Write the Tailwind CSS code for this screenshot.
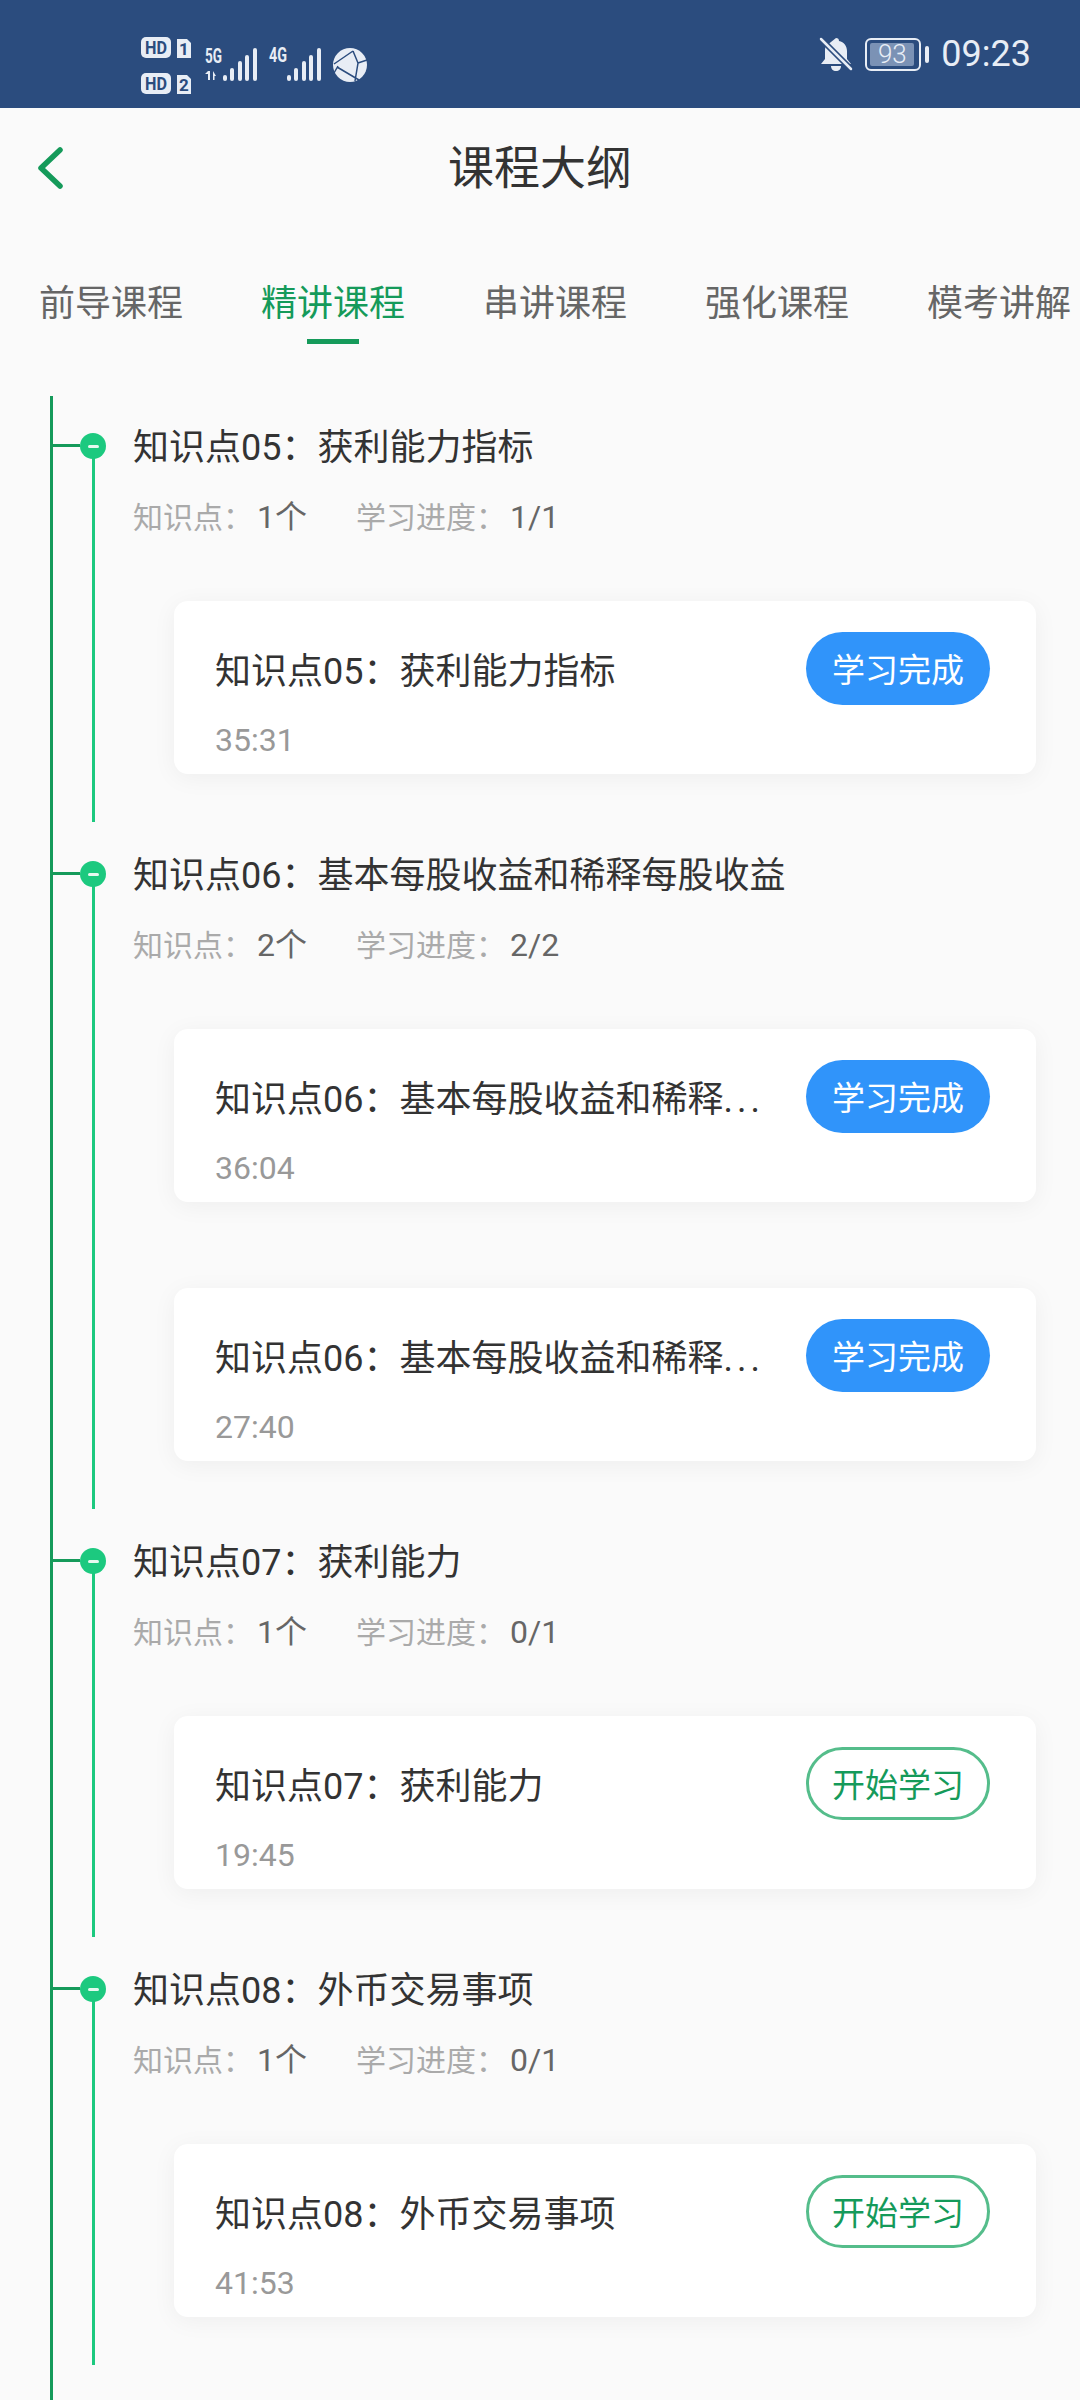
<!DOCTYPE html>
<html lang="en">
<head>
    <meta charset="UTF-8">
    <meta name="viewport" content="width=device-width, initial-scale=1.0">
    <title>课程大纲</title>
    <script src="https://cdn.jsdelivr.net/npm/@tailwindcss/browser@4"></script>
</head>
<body class="bg-[#fafafa] font-['Roboto','Noto_Sans_CJK_SC',sans-serif]">
<div class="w-[1080px] h-[2400px] flex flex-col overflow-hidden">

    <!-- status bar -->
    <div class="h-[108px] shrink-0 bg-[#2b4c7e] flex items-center justify-between text-[#e8edf5]">
        <svg width="400" height="108" viewBox="0 0 400 108" fill="#e8edf5">
            <rect x="141" y="37" width="30" height="21" rx="5"/>
            <text x="145" y="54" font-family="Roboto" font-weight="700" font-size="18" textLength="22" lengthAdjust="spacingAndGlyphs" fill="#2b4c7e">HD</text>
            <path d="M177 39h10l4 4v15h-14z"/>
            <text x="184" y="55" text-anchor="middle" font-family="Roboto" font-weight="700" font-size="17" fill="#2b4c7e">1</text>
            <rect x="141" y="73" width="30" height="21" rx="5"/>
            <text x="145" y="90" font-family="Roboto" font-weight="700" font-size="18" textLength="22" lengthAdjust="spacingAndGlyphs" fill="#2b4c7e">HD</text>
            <path d="M177 75h10l4 4v15h-14z"/>
            <text x="184" y="91" text-anchor="middle" font-family="Roboto" font-weight="700" font-size="17" fill="#2b4c7e">2</text>
            <text x="205" y="63" font-family="Roboto" font-weight="700" font-size="21" textLength="17" lengthAdjust="spacingAndGlyphs">5G</text>
            <path d="M208 71h2v9h-2zM205 74l3-3v3zM213 71l3 5h-1.500v4h-1.500z"/>
            <rect x="223" y="75" width="4" height="6" rx="2"/>
            <rect x="230" y="68" width="4" height="13" rx="2"/>
            <rect x="238" y="61" width="4" height="20" rx="2"/>
            <rect x="245" y="55" width="4" height="26" rx="2"/>
            <rect x="253" y="48" width="4" height="33" rx="2"/>
            <text x="269" y="62" font-family="Roboto" font-weight="700" font-size="21" textLength="18" lengthAdjust="spacingAndGlyphs">4G</text>
            <rect x="287" y="75" width="4" height="6" rx="2"/>
            <rect x="294" y="68" width="4" height="13" rx="2"/>
            <rect x="302" y="61" width="4" height="20" rx="2"/>
            <rect x="309" y="55" width="4" height="26" rx="2"/>
            <rect x="317" y="48" width="4" height="33" rx="2"/>
            <circle cx="350" cy="65" r="17"/>
            <path d="M334 64l19-13M337 67l22 13M353 51l5 12-3 18M358 63l9-3M338 66l-4 7" stroke="#2b4c7e" stroke-width="1.500" fill="none"/>
        </svg>
        <div class="flex items-center mr-[49px]">
            <svg width="36" height="36" viewBox="0 0 36 36" fill="#e8edf5" class="mr-[11px]">
                <path d="M18 2c2 0 3 1 3 3 5 1 8 5 8 10v8l4 5H3l4-5v-8c0-2 0-3 1-5z"/>
                <path d="M13 30h10c0 3-2 5-5 5s-5-2-5-5z"/>
                <path d="M3 3l30 30" stroke="#2b4c7e" stroke-width="6"/>
                <path d="M3 3l30 30" stroke="#e8edf5" stroke-width="2.500" stroke-linecap="round"/>
            </svg>
            <div class="w-[56px] h-[33px] rounded-[6px] border-[2.500px] border-[#e8edf5] p-[3px] flex">
                <div class="w-[44px] h-full bg-[#7b92b5] rounded-[2px] text-[26px] leading-[22px] text-center font-light">93</div>
            </div>
            <div class="w-[4px] h-[17px] ml-[4px] rounded-[2px] bg-[#e8edf5]"></div>
            <div class="ml-[12px] text-[36px] leading-[40px]">09:23</div>
        </div>
    </div>

    <!-- header -->
    <div class="h-[118px] shrink-0 relative flex items-center justify-center">
        <svg class="absolute left-[36px] top-[38px]" width="30" height="44" viewBox="0 0 30 44" fill="none">
            <path d="M24 4L5 22l19 18" stroke="#159a5a" stroke-width="5.500" stroke-linecap="round" stroke-linejoin="round"/>
        </svg>
        <div class="text-[46px] leading-[60px] text-[#333333] mt-[2px]">课程大纲</div>
    </div>

    <!-- tabs -->
    <div class="h-[170px] shrink-0 pl-[39px] pt-[53px] flex gap-[78px] whitespace-nowrap text-[36px] leading-[50px] text-[#666666]">
        <div>前导课程</div>
        <div class="flex flex-col items-center text-[#159a5a]">
            <div>精讲课程</div>
            <div class="w-[52px] h-[5px] mt-[10px] bg-[#159a5a]"></div>
        </div>
        <div>串讲课程</div>
        <div>强化课程</div>
        <div>模考讲解</div>
    </div>

    <!-- timeline -->
    <div class="flex-1 ml-[50px] border-l-[3px] border-[#159a5a]">

        <div class="relative pt-[27px] pb-[48px] mb-[2px] pl-[80px]">
            <div class="absolute left-0 top-[48px] w-[27px] h-[3px] bg-[#159a5a]"></div>
            <div class="absolute left-[39px] top-[48px] bottom-0 w-[3px] bg-[#1cc97f]"></div>
            <div class="absolute left-[27px] top-[37px] w-[26px] h-[26px] rounded-full bg-[#1cc97f] flex items-center justify-center">
                <div class="w-[11px] h-[3px] rounded-full bg-[#e6f9f0]"></div>
            </div>
            <div class="text-[36px] leading-[50px] text-[#333333]">知识点05&#xFF1A;获利能力指标</div>
            <div class="mt-[25px] flex h-[40px] text-[30px] leading-[40px] text-[#aaaaaa]">
                <div class="w-[223px]">知识点&#xFF1A;<span class="ml-[4px] text-[32px] leading-none text-[#666666]">1个</span></div>
                <div>学习进度&#xFF1A;<span class="ml-[4px] text-[32px] leading-none text-[#666666]">1/1</span></div>
            </div>
            <div class="mt-[63px] w-[862px] h-[173px] ml-[41px] pt-[31px] pl-[41px] pr-[46px] bg-white rounded-[14px] shadow-[0_4px_24px_rgba(0,0,0,0.05)]">
                <div class="flex items-center">
                    <div class="flex-1 min-w-0 whitespace-nowrap pt-[6px] text-[36px] leading-[50px] text-[#333333]">知识点05&#xFF1A;获利能力指标</div>
                    <div class="w-[184px] h-[73px] pt-[5px] rounded-full bg-[#3094fa] flex items-center justify-center text-[33px] text-white">学习完成</div>
                </div>
                <div class="mt-[15px] text-[32px] leading-[40px] text-[#999999]">35:31</div>
            </div>
        </div>

        <div class="relative pt-[27px] pb-[48px] mb-[2px] pl-[80px]">
            <div class="absolute left-0 top-[48px] w-[27px] h-[3px] bg-[#159a5a]"></div>
            <div class="absolute left-[39px] top-[48px] bottom-0 w-[3px] bg-[#1cc97f]"></div>
            <div class="absolute left-[27px] top-[37px] w-[26px] h-[26px] rounded-full bg-[#1cc97f] flex items-center justify-center">
                <div class="w-[11px] h-[3px] rounded-full bg-[#e6f9f0]"></div>
            </div>
            <div class="text-[36px] leading-[50px] text-[#333333]">知识点06&#xFF1A;基本每股收益和稀释每股收益</div>
            <div class="mt-[25px] flex h-[40px] text-[30px] leading-[40px] text-[#aaaaaa]">
                <div class="w-[223px]">知识点&#xFF1A;<span class="ml-[4px] text-[32px] leading-none text-[#666666]">2个</span></div>
                <div>学习进度&#xFF1A;<span class="ml-[4px] text-[32px] leading-none text-[#666666]">2/2</span></div>
            </div>
            <div class="mt-[63px] w-[862px] h-[173px] ml-[41px] pt-[31px] pl-[41px] pr-[46px] bg-white rounded-[14px] shadow-[0_4px_24px_rgba(0,0,0,0.05)]">
                <div class="flex items-center">
                    <div class="flex-1 min-w-0 whitespace-nowrap pt-[6px] text-[36px] leading-[50px] text-[#333333]">知识点06&#xFF1A;基本每股收益和稀释<span class="tracking-[4px]">...</span></div>
                    <div class="w-[184px] h-[73px] pt-[5px] rounded-full bg-[#3094fa] flex items-center justify-center text-[33px] text-white">学习完成</div>
                </div>
                <div class="mt-[15px] text-[32px] leading-[40px] text-[#999999]">36:04</div>
            </div>
            <div class="mt-[86px] w-[862px] h-[173px] ml-[41px] pt-[31px] pl-[41px] pr-[46px] bg-white rounded-[14px] shadow-[0_4px_24px_rgba(0,0,0,0.05)]">
                <div class="flex items-center">
                    <div class="flex-1 min-w-0 whitespace-nowrap pt-[6px] text-[36px] leading-[50px] text-[#333333]">知识点06&#xFF1A;基本每股收益和稀释<span class="tracking-[4px]">...</span></div>
                    <div class="w-[184px] h-[73px] pt-[5px] rounded-full bg-[#3094fa] flex items-center justify-center text-[33px] text-white">学习完成</div>
                </div>
                <div class="mt-[15px] text-[32px] leading-[40px] text-[#999999]">27:40</div>
            </div>
        </div>

        <div class="relative pt-[27px] pb-[48px] mb-[2px] pl-[80px]">
            <div class="absolute left-0 top-[48px] w-[27px] h-[3px] bg-[#159a5a]"></div>
            <div class="absolute left-[39px] top-[48px] bottom-0 w-[3px] bg-[#1cc97f]"></div>
            <div class="absolute left-[27px] top-[37px] w-[26px] h-[26px] rounded-full bg-[#1cc97f] flex items-center justify-center">
                <div class="w-[11px] h-[3px] rounded-full bg-[#e6f9f0]"></div>
            </div>
            <div class="text-[36px] leading-[50px] text-[#333333]">知识点07&#xFF1A;获利能力</div>
            <div class="mt-[25px] flex h-[40px] text-[30px] leading-[40px] text-[#aaaaaa]">
                <div class="w-[223px]">知识点&#xFF1A;<span class="ml-[4px] text-[32px] leading-none text-[#666666]">1个</span></div>
                <div>学习进度&#xFF1A;<span class="ml-[4px] text-[32px] leading-none text-[#666666]">0/1</span></div>
            </div>
            <div class="mt-[63px] w-[862px] h-[173px] ml-[41px] pt-[31px] pl-[41px] pr-[46px] bg-white rounded-[14px] shadow-[0_4px_24px_rgba(0,0,0,0.05)]">
                <div class="flex items-center">
                    <div class="flex-1 min-w-0 whitespace-nowrap pt-[6px] text-[36px] leading-[50px] text-[#333333]">知识点07&#xFF1A;获利能力</div>
                    <div class="w-[184px] h-[73px] pt-[5px] rounded-full border-[3px] border-[#55bd8b] flex items-center justify-center text-[33px] text-[#159a5a]">开始学习</div>
                </div>
                <div class="mt-[15px] text-[32px] leading-[40px] text-[#999999]">19:45</div>
            </div>
        </div>

        <div class="relative pt-[27px] pb-[48px] mb-[2px] pl-[80px]">
            <div class="absolute left-0 top-[48px] w-[27px] h-[3px] bg-[#159a5a]"></div>
            <div class="absolute left-[39px] top-[48px] bottom-0 w-[3px] bg-[#1cc97f]"></div>
            <div class="absolute left-[27px] top-[37px] w-[26px] h-[26px] rounded-full bg-[#1cc97f] flex items-center justify-center">
                <div class="w-[11px] h-[3px] rounded-full bg-[#e6f9f0]"></div>
            </div>
            <div class="text-[36px] leading-[50px] text-[#333333]">知识点08&#xFF1A;外币交易事项</div>
            <div class="mt-[25px] flex h-[40px] text-[30px] leading-[40px] text-[#aaaaaa]">
                <div class="w-[223px]">知识点&#xFF1A;<span class="ml-[4px] text-[32px] leading-none text-[#666666]">1个</span></div>
                <div>学习进度&#xFF1A;<span class="ml-[4px] text-[32px] leading-none text-[#666666]">0/1</span></div>
            </div>
            <div class="mt-[63px] w-[862px] h-[173px] ml-[41px] pt-[31px] pl-[41px] pr-[46px] bg-white rounded-[14px] shadow-[0_4px_24px_rgba(0,0,0,0.05)]">
                <div class="flex items-center">
                    <div class="flex-1 min-w-0 whitespace-nowrap pt-[6px] text-[36px] leading-[50px] text-[#333333]">知识点08&#xFF1A;外币交易事项</div>
                    <div class="w-[184px] h-[73px] pt-[5px] rounded-full border-[3px] border-[#55bd8b] flex items-center justify-center text-[33px] text-[#159a5a]">开始学习</div>
                </div>
                <div class="mt-[15px] text-[32px] leading-[40px] text-[#999999]">41:53</div>
            </div>
        </div>

    </div>
</div>
</body>
</html>
